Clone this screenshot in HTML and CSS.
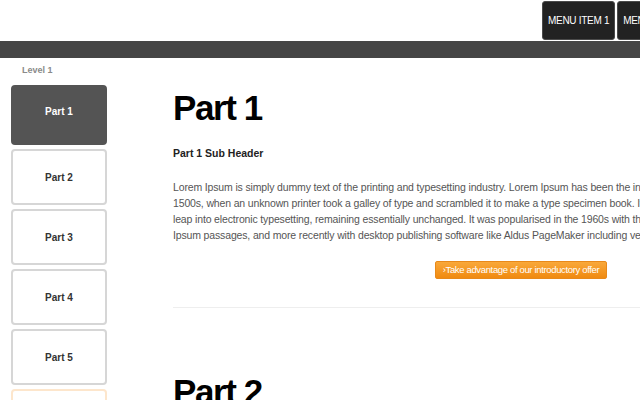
FILE: index.html
```html
<!DOCTYPE html>
<html>
<head>
<meta charset="utf-8">
<link rel="stylesheet" href="styles.css">
</head>
<body>
<header class="top">
  <nav class="menu">
    <a class="menu-item">MENU ITEM 1</a>
    <a class="menu-item">MENU ITEM 2</a>
    <a class="menu-item">MENU ITEM 3</a>
  </nav>
</header>
<div class="bar"></div>
<div class="layout">
  <aside class="side">
    <div class="level">Level 1</div>
    <ul class="parts">
      <li class="part active">Part 1</li>
      <li class="part">Part 2</li>
      <li class="part">Part 3</li>
      <li class="part">Part 4</li>
      <li class="part">Part 5</li>
      <li class="part hint">Part 6</li>
    </ul>
  </aside>
  <main class="content">
    <section class="section">
      <h1 class="title">Part 1</h1>
      <h2 class="sub">Part 1 Sub Header</h2>
      <p class="text">Lorem Ipsum is simply dummy text of the printing and typesetting industry. Lorem Ipsum has been the industry's standard dummy text ever since the<br>1500s, when an unknown printer took a galley of type and scrambled it to make a type specimen book. It has survived not only five centuries, but also the<br>leap into electronic typesetting, remaining essentially unchanged. It was popularised in the 1960s with the release of Letraset sheets containing Lorem<br>Ipsum passages, and more recently with desktop publishing software like Aldus PageMaker including versions of Lorem Ipsum.</p>
      <div class="cta-row"><a class="cta">&rsaquo;Take advantage of our introductory offer</a></div>
    </section>
    <section class="section second">
      <h1 class="title">Part 2</h1>
    </section>
  </main>
</div>
</body>
</html>
```
FILE: styles.css
```css
html, body {
  margin: 0;
  padding: 0;
  background: #fff;
  overflow: hidden;
  font-family: "Liberation Sans", Arial, sans-serif;
}
.top {
  height: 41px;
  display: flex;
  padding-left: 542px;
  box-sizing: border-box;
  width: 900px;
}
.menu {
  display: flex;
  gap: 2px;
  padding-top: 1px;
}
.menu-item {
  display: flex;
  align-items: center;
  height: 39px;
  box-sizing: border-box;
  padding: 0 5px;
  background: #222;
  border: 1px solid #4a4a4a;
  border-radius: 3px;
  color: #fff;
  font-size: 10px;
  letter-spacing: -0.3px;
  white-space: nowrap;
}
.bar {
  height: 17px;
  background: #454545;
}
.layout {
  display: flex;
  width: 900px;
}
.side {
  width: 96px;
  padding-left: 11px;
  flex: none;
}
.level {
  font-size: 9px;
  font-weight: bold;
  color: #8a8a8a;
  padding: 6px 0 0 11px;
  line-height: 12px;
  height: 20px;
}
.parts {
  list-style: none;
  margin: 1px 0 0;
  padding: 0;
}
.part {
  height: 56px;
  box-sizing: border-box;
  border: 2px solid #d6d6d6;
  border-radius: 4px;
  margin-bottom: 4px;
  display: flex;
  align-items: center;
  justify-content: center;
  font-size: 10px;
  font-weight: bold;
  color: #333;
}
.part:nth-child(3),
.part:nth-child(5) {
  margin-top: 1px;
}
.part.active {
  height: 60px;
  background: #545454;
  border-color: #545454;
  color: #fff;
  padding-bottom: 8px;
}
.part.hint {
  border-color: #fde6cc;
}
.content {
  margin-left: 66px;
  width: 696px;
  flex: none;
}
.section {
  border-bottom: 1px solid #eeeeee;
  padding-bottom: 28px;
}
.section.second {
  border-bottom: none;
}
.title {
  margin: 31px 0 0;
  font-size: 35px;
  line-height: 37px;
  letter-spacing: -1.4px;
  font-weight: bold;
  color: #000;
}
.second .title {
  margin-top: 65px;
}
.sub {
  margin: 19px 0 0;
  font-size: 10.5px;
  line-height: 16px;
  font-weight: bold;
  color: #222;
}
.text {
  margin: 18px 0 0;
  font-size: 10.5px;
  letter-spacing: -0.15px;
  line-height: 16px;
  color: #555;
  white-space: nowrap;
}
.cta-row {
  display: flex;
  justify-content: center;
  margin-top: 18px;
}
.cta {
  display: block;
  height: 18px;
  line-height: 16px;
  box-sizing: border-box;
  padding: 0 7px;
  font-size: 9.5px;
  letter-spacing: -0.35px;
  color: #fff;
  background: linear-gradient(#f9a83a, #f08a10);
  border: 1px solid #e8891a;
  border-radius: 2px;
  white-space: nowrap;
}
```
